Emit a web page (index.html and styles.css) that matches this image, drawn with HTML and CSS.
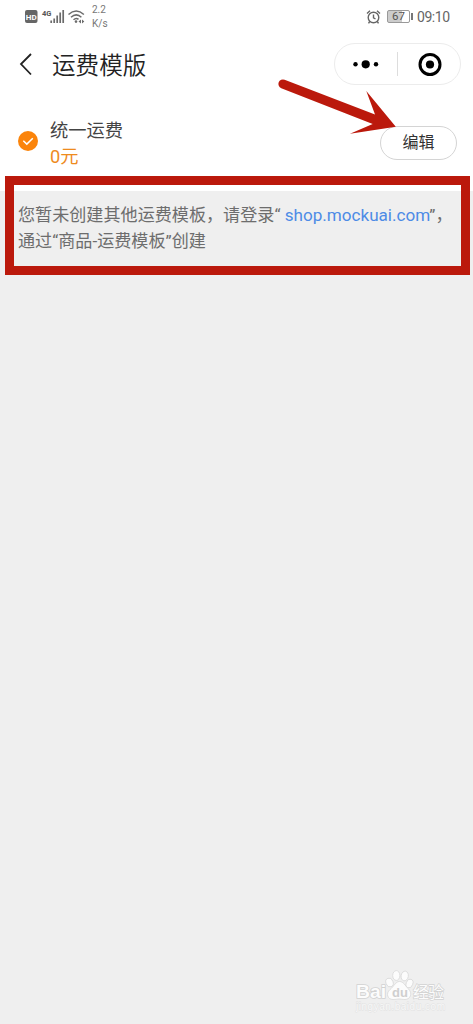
FILE: index.html
```html
<!DOCTYPE html>
<html lang="zh-CN">
<head>
<meta charset="utf-8">
<title>运费模版</title>
<link rel="stylesheet" href="styles.css">
</head>
<body>
<div class="screen">
  <header class="status">
    <svg class="status-icons" width="62" height="20" viewBox="24 6 62 20">
      <rect x="25" y="10" width="12.5" height="13" rx="2" fill="#666"/>
      <text x="25.800" y="19.500" class="hd">HD</text>
      <text x="42" y="15.700" class="net">4G</text>
      <path d="M51.200 20.500v2.500M54.200 18.500v4.500M57.200 15.500v7.500M60.200 12.500v10.500M63.200 10v13" stroke="#6b6b6b" stroke-width="1.700" fill="none"/>
      <g fill="none" stroke="#6b6b6b" stroke-width="1.500"><path d="M68.500 14.500q7.700-7 15.400 0M71 17.200q5.200-4.700 10.400 0M73.500 19.700q2.700-2.400 5 -.3"/></g>
      <circle cx="76" cy="21.600" r="1.300" fill="#6b6b6b"/>
      <path d="M81 19.500v4l-2.500-2zM82 19.500v4l2.300-2z" fill="#6b6b6b"/>
    </svg>
    <div class="speed"><span>2.2</span><span>K/s</span></div>
    <div class="status-right">
      <svg width="15" height="16" viewBox="0 0 15 16" fill="none" stroke="#666" stroke-width="1.400"><circle cx="7.500" cy="8.500" r="5.300"/><path d="M7.500 5.500v3.300l2 1.200M1 4.500l3-2.700M14 4.500l-3-2.700M3.700 12.500l-1.200 1.800M11.300 12.500l1.200 1.800"/></svg>
      <div class="battery"><span>67</span></div>
      <span class="battery-tip"></span>
      <span class="clock">09:10</span>
    </div>
  </header>
  <nav class="nav">
    <svg class="back" width="16" height="24" viewBox="0 0 16 24"><path d="M13 2L3 12l10 10.500" fill="none" stroke="#222" stroke-width="1.800"/></svg>
    <h1 class="title">运费模版</h1>
    <div class="capsule">
      <svg width="126" height="42" viewBox="0 0 126 42"><circle cx="20.500" cy="21.300" r="2.200"/><circle cx="30.700" cy="21.300" r="4.100"/><circle cx="41" cy="21.300" r="2.200"/><path d="M62.500 9v24" stroke="#ddd"/><circle cx="95" cy="21.500" r="10" fill="none" stroke="#000" stroke-width="3"/><circle cx="95" cy="21.500" r="4.100"/></svg>
    </div>
  </nav>
  <section class="rate">
    <svg class="check" width="20" height="20" viewBox="0 0 20 20"><circle cx="10" cy="10" r="10" fill="#fb840b"/><path d="M5.300 9.800l3.500 3.300 6-5.800" fill="none" stroke="#fff" stroke-width="1.500"/></svg>
    <div class="rate-info"><div class="rate-name">统一运费</div><div class="rate-price">0元</div></div>
    <button class="edit">编辑</button>
  </section>
  <main class="content">
    <p class="hint">您暂未创建其他运费模板，请登录“ <a class="link">shop.mockuai.com</a>”，<br>通过“商品-运费模板”创建</p>
  </main>
  <div class="highlight"></div>
  <svg class="arrow" width="130" height="64" viewBox="272 75 130 64"><path d="M284.600 79.700L375 114.500 366.300 91 395.800 126.800 350 133.800 372.700 124 281.300 88.200A4.500 4.500 0 0 1 284.600 79.700z" fill="#bb190c"/></svg>
  <svg class="watermark" width="110" height="54" viewBox="350 966 110 54">
    <text x="356" y="998" class="wm-name" textLength="30" lengthAdjust="spacingAndGlyphs">Bai</text>
    <g class="wm-paw"><ellipse cx="389.500" cy="982.500" rx="3.600" ry="4.500" transform="rotate(-20 389.500 982.500)"/><ellipse cx="396.300" cy="975.500" rx="3.600" ry="4.900"/><ellipse cx="404.700" cy="976" rx="3.600" ry="4.900" transform="rotate(10 404.700 976)"/><ellipse cx="409.500" cy="983.500" rx="3.300" ry="4.500" transform="rotate(20 409.500 983.500)"/><path d="M399.500 981.500c4 0 5.500 4 8.500 7 5.500 5 2 11-3 11-2.500 0-4-.5-6-.5s-3 .5-6 .5c-5.500 0-7.500-6-3-10 4-3 5.500-8 9.500-8z"/></g>
    <text x="392" y="997" class="wm-du">du</text>
    <text x="413" y="997.500" class="wm-cn" textLength="31">经验</text>
    <text x="356" y="1010" class="wm-url" textLength="89">jingyan.baidu.com</text>
  </svg>
</div>
</body>
</html>
```

FILE: styles.css
```css
* { box-sizing: border-box; }
body { margin: 0; background: #efefef; font-family: Roboto, "Noto Sans CJK SC", sans-serif; }
.screen { position: relative; height: 1024px; overflow: hidden; display: flex; flex-direction: column; }
.status { height: 34px; background: #fff; display: flex; align-items: flex-start; padding: 6px 22px 0 24px; color: #666; }
.status-icons { flex: none; }
.hd { font: 700 8px Roboto, sans-serif; fill: #fff; }
.net { font: 700 7.5px Roboto, sans-serif; fill: #555; }
.speed { display: flex; flex-direction: column; margin: -3px 0 0 6px; font-size: 10px; line-height: 14px; color: #777; }
.status-right { display: flex; align-items: center; height: 21px; margin-left: auto; }
.battery { margin-left: 6px; width: 23px; height: 13px; border: 1px solid #999; border-radius: 2px; background: linear-gradient(90deg, #ccc 67%, #fff 67%); font-size: 11.5px; line-height: 11px; text-align: center; color: #555; }
.battery-tip { width: 2px; height: 7px; margin-left: 1px; background: #777; }
.clock { margin-left: 4px; width: 34px; font-size: 14px; letter-spacing: -.45px; white-space: nowrap; }
.nav { height: 68px; padding: 9px 12px 0 18px; background: #fff; display: flex; align-items: flex-start; }
.back { margin-top: 9px; }
.title { margin: 5px 0 0 18px; font-size: 23.6px; line-height: 36px; font-weight: 350; color: #222; }
.capsule { margin-left: auto; width: 127px; height: 42px; border: 1px solid #ececec; border-radius: 21px; }
.capsule svg { display: block; margin-top: -1px; }
.rate { height: 89px; padding: 15px 16px 0 18px; background: #fff; display: flex; align-items: flex-start; }
.check { margin-top: 14px; }
.rate-info { margin-left: 12px; font-size: 18.3px; line-height: 27px; }
.rate-name { color: #444; }
.rate-price { color: #ee8b1e; margin-top: -1px; }
.edit { margin: 9px 0 0 auto; width: 77px; height: 34px; padding: 0; border: 1px solid #d4d4d4; border-radius: 17px; background: #fff; color: #333; font: 400 16px/30px Roboto, "Noto Sans CJK SC", sans-serif; }
.content { flex: 1; padding: 11px 0 0 18px; }
.hint { margin: 0; color: #6d6d6d; font-size: 17.1px; line-height: 26px; white-space: nowrap; }
.link { color: #4d8be6; }
.highlight { position: absolute; left: 5px; top: 176px; width: 465px; height: 99px; border: 9px solid #bb190c; }
.arrow { position: absolute; left: 272px; top: 75px; }
.watermark { position: absolute; left: 350px; top: 966px; }
.wm-paw { fill: #fcfcfc; stroke: #d8d8d8; stroke-width: .8px; }
.wm-name, .wm-cn { font: 700 19px "Liberation Sans", "Noto Sans CJK SC", sans-serif; fill: #fcfcfc; stroke: #d2d2d2; stroke-width: 1.6px; paint-order: stroke; }
.wm-cn { font-size: 16px; font-weight: 400; stroke-width: 1.3px; }
.wm-du { font: 700 13px "Liberation Sans", sans-serif; fill: #cfcfcf; }
.wm-url { font: 400 10px "Liberation Sans", sans-serif; fill: #f8f8f8; stroke: #e0e0e0; stroke-width: .8px; paint-order: stroke; }
```
